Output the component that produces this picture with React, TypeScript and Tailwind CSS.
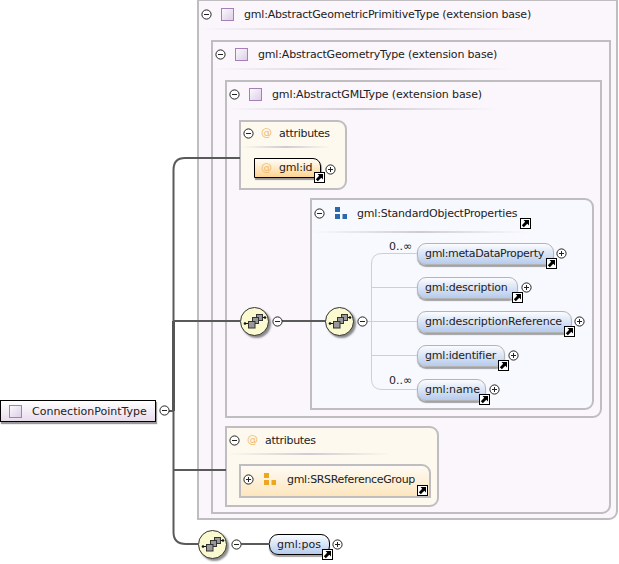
import type { ReactNode } from "react";

const Minus = ({ className = "" }: { className?: string }) => (
    <svg className={`shrink-0 ${className}`} width="11" height="11" viewBox="0 0 11 11">
        <circle cx="5.5" cy="5.5" r="4.6" fill="#fff" stroke="#222" strokeWidth="1" />
        <path d="M3 5.5H8" stroke="#222" strokeWidth="1" />
    </svg>
);

const Plus = ({ className = "" }: { className?: string }) => (
    <svg className={`shrink-0 ${className}`} width="11" height="11" viewBox="0 0 11 11">
        <circle cx="5.5" cy="5.5" r="4.6" fill="#fff" stroke="#222" strokeWidth="1" />
        <path d="M3 5.5H8M5.5 3V8" stroke="#222" strokeWidth="1" />
    </svg>
);

// shortcut badge that sits over the corner of a node
const LinkMark = ({ className = "" }: { className?: string }) => (
    <svg className={`shrink-0 ${className}`} width="11" height="11" viewBox="0 0 11 11">
        <rect x="0.5" y="0.5" width="10" height="10" fill="#fff" stroke="#000" />
        <path d="M3.5 2H9V7.5L7.3 5.8L3.8 9.2L1.8 7.2L5.2 3.7Z" fill="#000" />
    </svg>
);

const TypeSquare = ({ className = "" }: { className?: string }) => (
    <div className={`shrink-0 w-[13px] h-[13px] border border-[#a77fb8] bg-linear-to-br from-[#fbf9fc] to-[#dccfe6] ${className}`} />
);

const Seq = ({ className = "" }: { className?: string }) => (
    <div className={`shrink-0 w-[29px] h-[29px] rounded-full border border-[#333] bg-[#fbf9cf] shadow-[2px_2px_2px_rgba(0,0,0,0.45)] ${className}`}>
        <svg className="block" width="27" height="27" viewBox="0 0 27 27">
            <path d="M4 15.5H9M19 9.5H24" stroke="#111" strokeWidth="1" />
            <circle cx="4" cy="15.5" r="1.3" fill="#111" />
            <circle cx="24" cy="9.5" r="1.3" fill="#111" />
            <rect x="15.5" y="6.5" width="6" height="6" fill="#999" stroke="#333" />
            <rect x="11.5" y="9.5" width="6" height="6" fill="#999" stroke="#333" />
            <rect x="7.5" y="13.5" width="6.5" height="6.5" fill="#999" stroke="#333" />
        </svg>
    </div>
);

const Label = ({ className = "", children }: { className?: string; children: ReactNode }) => (
    <div className={`h-[16px] pt-[2px] leading-[14px] text-[11px] text-[#222] whitespace-nowrap ${className}`}>{children}</div>
);

const Sep = ({ className = "" }: { className?: string }) => (
    <div className={`h-[2px] bg-linear-to-r from-transparent via-[#cfcbd2] to-transparent ${className}`} />
);

const At = ({ className = "" }: { className?: string }) => (
    <div className={`w-[18px] leading-[14px] text-[11px] text-[#efbb6b] ${className}`}>@</div>
);

const Squares = ({ className = "", color }: { className?: string; color: string }) => (
    <svg className={`shrink-0 ${className}`} width="12" height="12" viewBox="0 0 12 12" fill={color}>
        <rect x="0" y="0" width="5" height="5" />
        <rect x="0" y="7" width="5" height="5" />
        <rect x="7.5" y="7" width="4.5" height="5" />
    </svg>
);

const TypeHeader = ({ title, tracking }: { title: string; tracking: string }) => (
    <div className="flex items-center h-[24px] pl-[2px]">
        <Minus />
        <TypeSquare className="ml-[9px]" />
        <Label className={`ml-[10px] ${tracking}`}>{title}</Label>
    </div>
);

const AttributesHeader = ({ className, tracking }: { className: string; tracking: string }) => (
    <div className={`flex items-center pl-[2px] ${className}`}>
        <Minus />
        <At className="ml-[7px]" />
        <Label className={tracking}>attributes</Label>
    </div>
);

type PillRowProps = {
    title: string;
    width: string;
    tracking: string;
    linkRight: string;
    plusGap: string;
};

const PillRow = ({ title, width, tracking, linkRight, plusGap }: PillRowProps) => (
    <div className="flex items-start">
        <div className={`relative h-[22px] pl-[7px] leading-[20px] text-[11px] text-[#222] whitespace-nowrap rounded-[9px] border border-[#b4b4b4] bg-linear-to-b from-[#fbfcfe] to-[#b7cbec] shadow-[0_2px_1px_rgba(0,0,0,0.35)] ${width} ${tracking}`}>
            {title}
            <LinkMark className={`absolute bottom-[-5px] ${linkRight}`} />
        </div>
        <Plus className={`mt-[5px] ${plusGap}`} />
    </div>
);

const frame = "border-2 border-[#bfbdc0]";

export default function App() {
    return (
        <div className="relative w-[619px] h-[564px] overflow-hidden bg-white font-['DejaVu_Sans',sans-serif]">
            <div className="flex flex-col pl-[197px]">
                <div className={`${frame} mt-[-1px] pt-[1px] w-[421px] h-[521px] bg-[#faf6fc] rounded-br-[9px]`}>
                    <TypeHeader title="gml:AbstractGeometricPrimitiveType (extension base)" tracking="tracking-[-0.2px]" />
                    <Sep className="mt-[2px] w-[330px]" />

                    <div className={`${frame} ml-[12px] mt-[10px] w-[400px] h-[474px] bg-[#faf6fc] rounded-br-[9px]`}>
                        <TypeHeader title="gml:AbstractGeometryType (extension base)" tracking="tracking-[-0.17px]" />
                        <Sep className="mt-[2px] w-[300px]" />

                        <div className={`${frame} ml-[12px] mt-[10px] w-[377px] h-[338px] bg-[#faf6fc] rounded-br-[9px]`}>
                            <TypeHeader title="gml:AbstractGMLType (extension base)" tracking="tracking-[-0.11px]" />
                            <Sep className="mt-[2px] w-[270px]" />

                            {/* attributes */}
                            <div className={`${frame} ml-[12px] mt-[10px] w-[108px] h-[70px] bg-[#fef9ee] rounded-tr-[9px] rounded-br-[9px]`}>
                                <AttributesHeader className="h-[22px]" tracking="tracking-[-0.3px]" />
                                <Sep className="mt-[2px] w-[90px]" />
                                <div className="flex items-start ml-[13px] mt-[10px]">
                                    <div className="relative flex w-[67px] h-[20px] pl-[6px] leading-[18px] text-[11px] text-[#222] border border-black rounded-tr-[8px] bg-linear-to-b from-[#fffdf8] to-[#fdd491] shadow-[1px_2px_1px_rgba(0,0,0,0.4)]">
                                        <span className="w-[18px] text-[#efbb6b]">@</span>
                                        <span className="tracking-[-0.2px]">gml:id</span>
                                        <LinkMark className="absolute left-[59px] top-[13px]" />
                                    </div>
                                    <Plus className="ml-[4px] mt-[6px]" />
                                </div>
                            </div>

                            {/* StandardObjectProperties */}
                            <div className={`${frame} ml-[83px] mt-[8px] w-[284px] h-[212px] bg-[#f8f9fe] rounded-tr-[9px] rounded-br-[9px]`}>
                                <div className="relative flex items-center h-[26px] pl-[2px]">
                                    <Minus />
                                    <Squares className="ml-[10px]" color="#2a69ad" />
                                    <Label className="ml-[10px] tracking-[-0.2px]">gml:StandardObjectProperties</Label>
                                    <LinkMark className="absolute left-[208px] top-[18px]" />
                                </div>
                                <Sep className="mt-[5px] w-[215px]" />
                                <div className="flex flex-col gap-[12px] pl-[105px] pt-[10px]">
                                    <PillRow title="gml:metaDataProperty" width="w-[137px]" tracking="tracking-[-0.35px]" linkRight="right-[-4px]" plusGap="ml-[2px]" />
                                    <PillRow title="gml:description" width="w-[101px]" tracking="tracking-[-0.2px]" linkRight="right-[-6px]" plusGap="ml-[3px]" />
                                    <PillRow title="gml:descriptionReference" width="w-[155px]" tracking="tracking-[-0.17px]" linkRight="right-[-4px]" plusGap="ml-[2px]" />
                                    <PillRow title="gml:identifier" width="w-[88px]" tracking="tracking-[-0.2px]" linkRight="right-[-5px]" plusGap="ml-[3px]" />
                                    <PillRow title="gml:name" width="w-[69px]" tracking="tracking-[-0.1px]" linkRight="right-[-5px]" plusGap="ml-[3px]" />
                                </div>
                            </div>
                        </div>

                        {/* second attributes */}
                        <div className={`${frame} ml-[12px] mt-[8px] w-[214px] h-[81px] bg-[#fef9ee] rounded-tr-[9px] rounded-br-[9px]`}>
                            <AttributesHeader className="h-[24px]" tracking="tracking-[-0.3px]" />
                            <Sep className="mt-[1px] w-[165px]" />
                            <div className={`${frame} relative flex items-center ml-[12px] mt-[9px] w-[192px] h-[34px] pl-[2px] pb-[4px] bg-linear-to-b from-[#fefbf4] to-[#fde6bd] rounded-tr-[9px]`}>
                                <Plus />
                                <Squares className="ml-[10px]" color="#eda61f" />
                                <Label className="ml-[11px] tracking-[-0.33px]">gml:SRSReferenceGroup</Label>
                                <LinkMark className="absolute left-[176px] top-[19px]" />
                            </div>
                        </div>
                    </div>
                </div>

                {/* gml:pos */}
                <div className="flex items-center mt-[10px] h-[29px]">
                    <Seq className="ml-[1px]" />
                    <Minus className="ml-[4px]" />
                    <div className="relative ml-[27px] w-[61px] h-[21px] pl-[7px] leading-[19px] text-[11px] text-[#222] rounded-[9px] border border-black bg-linear-to-b from-[#fbfcfe] to-[#b7cbec] shadow-[0_2px_1px_rgba(0,0,0,0.35)]">
                        gml:pos
                        <LinkMark className="absolute left-[52px] top-[14px]" />
                    </div>
                    <Plus className="ml-[2px]" />
                </div>
            </div>

            {/* connectors of the diagram */}
            <svg className="absolute left-0 top-0" width="619" height="564" fill="none">
                <path d="M240 158H185Q173.5 158 173.5 170V532Q173.5 544 186 544H198" stroke="#5a5a5a" strokeWidth="2" />
                <path d="M173.5 321V411" stroke="#555" strokeWidth="3" />
                <path d="M160 411H173M173 321H240M173 470H226" stroke="#5a5a5a" strokeWidth="2" />
                <path d="M282 321H326M241 544H270" stroke="#5a5a5a" strokeWidth="2" />
                <path d="M417 253.5H382Q371.5 253.5 371.5 264V379Q371.5 389.5 382 389.5H417M371.5 287.5H417M367 321.5H417M371.5 355.5H417" stroke="#cfcfcf" strokeWidth="1" />
            </svg>

            {/* root node of the diagram */}
            <div className="absolute left-0 top-[400px] flex items-center w-[156px] h-[22px] pl-[8px] border border-black bg-linear-to-b from-white to-[#e8dcec] shadow-[1px_2px_1px_rgba(0,0,0,0.4)]">
                <TypeSquare />
                <Label className="ml-[10px]">ConnectionPointType</Label>
            </div>
            <Minus className="absolute left-[159px] top-[405px]" />

            {/* sequence nodes on the connectors */}
            <Seq className="absolute left-[240px] top-[307px]" />
            <Minus className="absolute left-[272px] top-[316px]" />
            <Seq className="absolute left-[325px] top-[307px]" />
            <Minus className="absolute left-[357px] top-[316px]" />
            <Label className="absolute left-[389px] top-[238px]">0..∞</Label>
            <Label className="absolute left-[389px] top-[372px]">0..∞</Label>
        </div>
    );
}
